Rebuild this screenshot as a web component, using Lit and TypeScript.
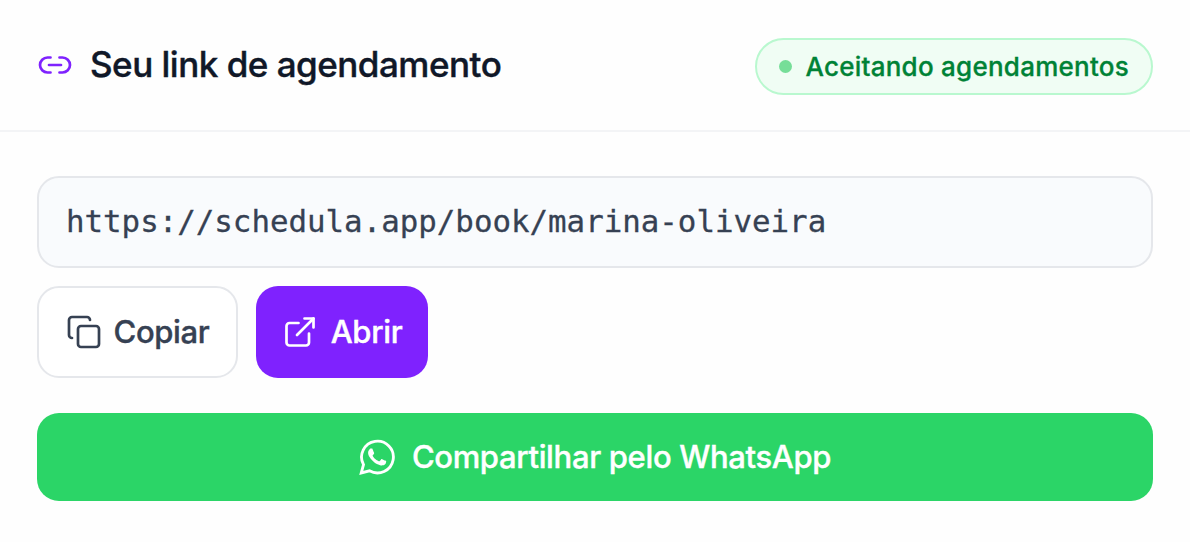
import { LitElement, html, css } from 'lit';
import { customElement, property } from 'lit/decorators.js';

@customElement('app-root')
export class AppRoot extends LitElement {
  @property({ type: String }) link = 'https://schedula.app/book/marina-oliveira';

  static styles = css`
    :host {
      display: block;
      height: 100vh;
      overflow: hidden;
      background: #fefefe;
      color: #101828;
      font-family: Inter, 'Liberation Sans', sans-serif;
      font-weight: 500;
      -webkit-text-stroke: 0.4px currentColor;
    }

    * {
      box-sizing: border-box;
    }

    svg {
      display: block;
      flex: none;
      width: 36px;
      height: 36px;
    }

    .stroked {
      fill: none;
      stroke: currentColor;
      stroke-width: 1.8;
      stroke-linecap: round;
      stroke-linejoin: round;
    }

    .header {
      display: flex;
      align-items: center;
      justify-content: space-between;
      height: 132px;
      padding: 2px 37px 0;
      border-bottom: 2px solid #f3f4f6;
    }

    .heading {
      display: flex;
      align-items: center;
      gap: 17px;
      margin: 0;
      padding-bottom: 3px;
      font-size: 35px;
      font-weight: 500;
      line-height: 48px;
    }

    .heading svg {
      color: #7f22fe;
    }

    .title {
      padding-bottom: 2px;
      letter-spacing: -0.5px;
    }

    .status {
      display: flex;
      align-items: center;
      gap: 13px;
      height: 57px;
      padding: 0 22px;
      border: 2px solid #b9f8cf;
      border-radius: 29px;
      background: #f0fdf4;
      color: #008236;
      font-size: 26px;
      letter-spacing: 0.25px;
      white-space: nowrap;
      -webkit-text-stroke-width: 0.3px;
    }

    .dot {
      width: 13px;
      height: 13px;
      border-radius: 50%;
      background: #76de98;
    }

    .body {
      padding: 44px 37px 0;
    }

    .url {
      display: flex;
      align-items: center;
      height: 92px;
      padding: 0 26px 3px 27px;
      border: 2px solid #e5e7eb;
      border-radius: 22px;
      background: #f9fbfd;
      color: #364153;
      font-family: 'DejaVu Sans Mono', monospace;
      font-size: 30.8px;
      font-weight: 400;
      -webkit-text-stroke-width: 0.3px;
    }

    .actions {
      display: flex;
      gap: 18px;
      margin: 18px 0 35px;
    }

    button {
      display: flex;
      align-items: center;
      justify-content: center;
      margin: 0;
      padding: 0;
      border: 0;
      border-radius: 22px;
      font: inherit;
      font-size: 31px;
      letter-spacing: -0.34px;
      white-space: nowrap;
    }

    button span {
      padding-bottom: 2px;
    }

    .copy {
      gap: 12px;
      width: 201px;
      height: 92px;
      border: 2px solid #e5e7eb;
      background: #fff;
      color: #364153;
    }

    .open {
      gap: 13px;
      width: 172px;
      height: 92px;
      background: #7f22fe;
      color: #fff;
    }

    .whatsapp {
      gap: 17px;
      width: 100%;
      height: 88px;
      background: #2bd567;
      color: #fff;
    }
  `;

  render() {
    return html`
      <header class="header">
        <h2 class="heading">
          <svg class="stroked" viewBox="0 0 24 24">
            <path d="M9 17H7A5 5 0 0 1 7 7h2" />
            <path d="M15 7h2a5 5 0 1 1 0 10h-2" />
            <path d="M8 12h8" />
          </svg>
          <span class="title">Seu link de agendamento</span>
        </h2>
        <div class="status">
          <span class="dot"></span>
          <span class="status-text">Aceitando agendamentos</span>
        </div>
      </header>
      <div class="body">
        <div class="url"><span>${this.link}</span></div>
        <div class="actions">
          <button class="copy">
            <svg class="stroked" viewBox="0 0 24 24">
              <rect width="14" height="14" x="8" y="8" rx="2" />
              <path d="M4 16c-1.1 0-2-.9-2-2V4c0-1.1.9-2 2-2h10c1.1 0 2 .9 2 2" />
            </svg>
            <span>Copiar</span>
          </button>
          <button class="open">
            <svg class="stroked" viewBox="0 0 24 24">
              <path d="M15 3h6v6" />
              <path d="M10 14 21 3" />
              <path d="M18 13v6a2 2 0 0 1-2 2H5a2 2 0 0 1-2-2V8a2 2 0 0 1 2-2h6" />
            </svg>
            <span>Abrir</span>
          </button>
        </div>
        <button class="whatsapp">
          <svg viewBox="0 0 24 24" fill="none" stroke="currentColor" stroke-width="1.9" stroke-linejoin="miter">
            <path d="M1.5 22.6 3 17.1A10.6 10.6 0 1 1 7 21.2Z" />
            <path
              fill="currentColor"
              stroke="none"
              d="M17.5 14.4c-.3-.15-1.76-.87-2.03-.97-.27-.1-.47-.15-.67.15-.2.3-.77.97-.94 1.16-.17.2-.35.22-.64.08-.3-.15-1.26-.46-2.39-1.48-.88-.79-1.48-1.76-1.65-2.06-.17-.3-.02-.46.13-.6.13-.14.3-.35.45-.53.15-.17.2-.3.3-.5.1-.2.05-.37-.03-.52-.07-.15-.67-1.61-.91-2.2-.24-.59-.49-.51-.67-.52h-.57c-.2 0-.52.08-.79.37-.27.3-1.04 1.02-1.04 2.48s1.07 2.88 1.21 3.07c.15.2 2.1 3.2 5.08 4.49.71.3 1.26.49 1.69.62.71.23 1.36.2 1.87.12.57-.08 1.76-.72 2-1.41.25-.7.25-1.29.18-1.41-.07-.13-.27-.2-.57-.35Z"
            />
          </svg>
          <span>Compartilhar pelo WhatsApp</span>
        </button>
      </div>
    `;
  }
}
